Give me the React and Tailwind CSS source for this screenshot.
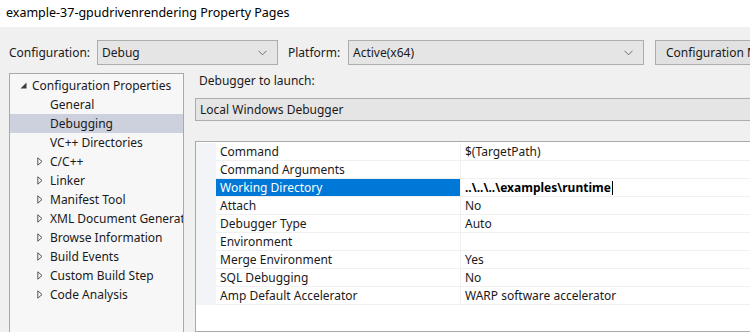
import React from "react";

const font = { fontFamily: '"Noto Sans", "Open Sans", sans-serif' };

function Chevron() {
  return (
    <svg width="9" height="6" viewBox="0 0 9 6" className="shrink-0">
      <path d="M0.5 0.8 L4.5 4.8 L8.5 0.8" fill="none" stroke="#6d6d6d" strokeWidth="1" />
    </svg>
  );
}

function Expanded() {
  return (
    <svg width="7" height="7" viewBox="0 0 7 7" className="shrink-0">
      <path d="M6.5 0.5 L6.5 6.5 L0.5 6.5 Z" fill="#3c3c3c" />
    </svg>
  );
}

function Collapsed() {
  return (
    <svg width="6" height="9" viewBox="0 0 6 9" className="shrink-0">
      <path d="M0.8 0.8 L5 4.5 L0.8 8.2 Z" fill="none" stroke="#555" strokeWidth="1" />
    </svg>
  );
}

const tree = [
  { label: "Configuration Properties", level: 0, icon: "exp" },
  { label: "General", level: 1 },
  { label: "Debugging", level: 1, selected: true },
  { label: "VC++ Directories", level: 1 },
  { label: "C/C++", level: 1, icon: "col" },
  { label: "Linker", level: 1, icon: "col" },
  { label: "Manifest Tool", level: 1, icon: "col" },
  { label: "XML Document Generator", level: 1, icon: "col" },
  { label: "Browse Information", level: 1, icon: "col" },
  { label: "Build Events", level: 1, icon: "col" },
  { label: "Custom Build Step", level: 1, icon: "col" },
  { label: "Code Analysis", level: 1, icon: "col" },
];

const props = [
  ["Command", "$(TargetPath)"],
  ["Command Arguments", ""],
  ["Working Directory", "..\\..\\..\\examples\\runtime", true],
  ["Attach", "No"],
  ["Debugger Type", "Auto"],
  ["Environment", ""],
  ["Merge Environment", "Yes"],
  ["SQL Debugging", "No"],
  ["Amp Default Accelerator", "WARP software accelerator"],
];

export default function App() {
  return (
    <div
      className="w-[750px] h-[332px] overflow-hidden bg-[#f0f0f0] text-[12px] text-[#1a1a1a] flex flex-col"
      style={font}
    >
      {/* title */}
      <div className="h-[27px] shrink-0 bg-white flex items-center pl-[6px] text-[12.5px] text-black">
        example-37-gpudrivenrendering Property Pages
      </div>

      {/* config row */}
      <div className="mt-[13px] h-[25px] shrink-0 flex items-center">
        <div className="w-[97px] pl-[9px] shrink-0">Configuration:</div>
        <div className="w-[181px] h-[25px] shrink-0 bg-[#e5e5e5] border border-[#adadad] flex items-center pl-[4px] pr-[10px]">
          <span className="flex-1">Debug</span>
          <Chevron />
        </div>
        <div className="w-[70px] pl-[10px] shrink-0">Platform:</div>
        <div className="w-[296px] h-[25px] shrink-0 bg-[#e5e5e5] border border-[#adadad] flex items-center pl-[4px] pr-[10px]">
          <span className="flex-1">Active(x64)</span>
          <Chevron />
        </div>
        <div className="ml-[11px] w-[120px] h-[25px] shrink-0 bg-[#e1e1e1] border border-[#adadad] flex items-center pl-[10px] whitespace-nowrap overflow-hidden">
          Configuration Manager...
        </div>
      </div>

      {/* main */}
      <div className="mt-[8px] flex flex-1 min-h-0">
        {/* tree */}
        <div className="ml-[9px] w-[175px] shrink-0 h-[300px] bg-[#f7f7f7] border border-[#a9a9a9] pt-[2px] overflow-hidden">
          {tree.map((t, i) => (
            <div
              key={i}
              className={
                "h-[19px] flex items-center whitespace-nowrap " +
                (t.selected ? "bg-[#cdd0dd]" : "")
              }
            >
              {t.level === 0 ? (
                <>
                  <div className="w-[22px] flex justify-end pr-[5px] shrink-0">
                    <Expanded />
                  </div>
                  <span>{t.label}</span>
                </>
              ) : (
                <>
                  <div className="w-[40px] flex justify-end pr-[7px] shrink-0">
                    {t.icon === "col" ? <Collapsed /> : null}
                  </div>
                  <span>{t.label}</span>
                </>
              )}
            </div>
          ))}
        </div>

        {/* right */}
        <div className="ml-[11px] flex-1 flex flex-col min-w-0">
          <div className="h-[17px] flex items-center pl-[4px] mt-[-1px]">Debugger to launch:</div>
          <div className="mt-[9px] h-[24px] w-[580px] bg-[#e5e5e5] border border-[#adadad] flex items-center pl-[4px]">
            Local Windows Debugger
          </div>
          <div className="mt-[20px] w-[580px] h-[200px] bg-white border border-[#a9a9a9] pt-[1px]">
            {props.map(([k, v, sel], i) => (
              <div key={i} className="h-[18px] flex">
                <div className="w-[20px] shrink-0 bg-[#f2f4f7]" />
                <div
                  className={
                    "w-[245px] shrink-0 flex items-center pl-[4px] pt-[1px] border-b border-r border-[#f0f0f0] " +
                    (sel ? "bg-[#0078d7] text-white" : "")
                  }
                >
                  {k}
                </div>
                <div className="flex-1 flex items-center pl-[4px] pt-[1px] border-b border-[#f0f0f0] whitespace-nowrap">
                  {sel ? (
                    <>
                      <span className="font-bold text-black">{v}</span>
                      <span className="inline-block w-[1px] h-[14px] bg-black ml-[1px]" />
                    </>
                  ) : (
                    v
                  )}
                </div>
              </div>
            ))}
          </div>
        </div>
      </div>
    </div>
  );
}
